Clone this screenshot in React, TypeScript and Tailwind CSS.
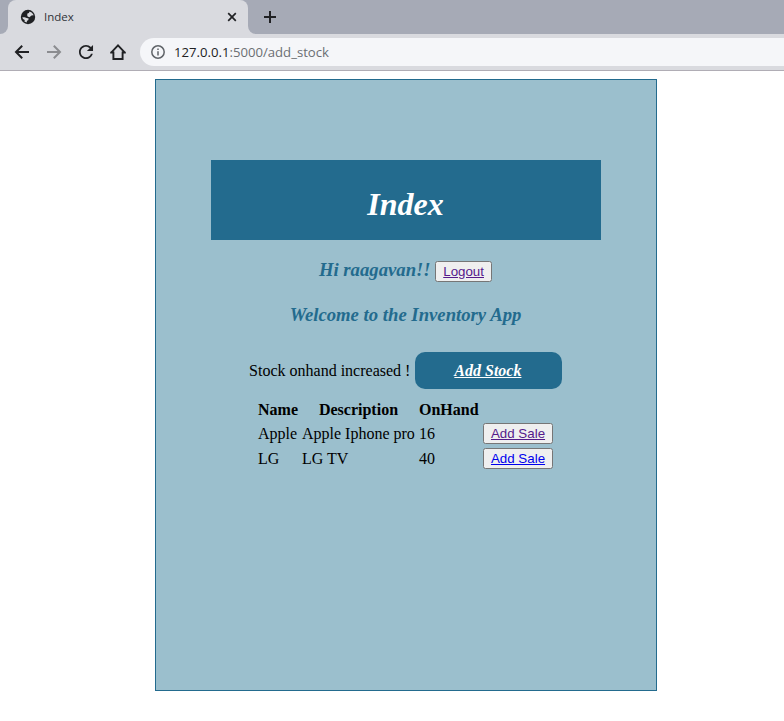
import React from "react";

const serif = "font-['Liberation_Serif','Times_New_Roman',serif]";
const ui = "font-['Open_Sans','Noto_Sans',sans-serif]";

function NativeButton({ label, className }: { label: string; className: string }) {
  return (
    <button
      className={`flex h-[21px] shrink-0 items-center justify-center rounded-[2.5px] border border-[#767676] bg-[#efefef] font-['Liberation_Sans',Arial,sans-serif] text-[13.333px] leading-[15px] whitespace-nowrap underline ${className}`}
    >
      {label}
    </button>
  );
}

function TabStrip() {
  return (
    <div className="flex h-[34px] bg-[#d9dadf]">
      <div className="w-2 rounded-br-[8px] bg-[#a6aab6]" />
      <div className="flex w-60 items-center bg-[#a6aab6]">
        <div className="flex h-full w-full items-center rounded-t-[8px] bg-[#d9dadf] pr-[10px] pl-3">
          <svg width="16" height="16" viewBox="0 0 16 16">
            <circle cx="8" cy="8" r="7.2" fill="#202124" />
            <path
              d="M7.4 4.6 8.9 3.9 9.5 2.5 11.6 3.4 13.2 5.3 13.4 6.6 12 6.2 10.6 7.2 9.4 8.3 7.6 7.6 7.2 6.2zM2.3 8.2 4.6 8.2 6.8 8.9 8.7 9.6 8.2 11.2 7 11.8 6.7 13.5 4.4 12.6 4.8 11 3 10z"
              fill="#d9dadf"
            />
          </svg>
          <span className={`ml-2 text-[11.5px] leading-4 text-[#303338] ${ui}`}>Index</span>
          <svg className="ml-auto" width="12" height="12" viewBox="0 0 12 12" stroke="#202124" strokeWidth="1.7">
            <path d="M2.2 2.2 9.8 9.8M9.8 2.2 2.2 9.8" />
          </svg>
        </div>
      </div>
      <div className="flex flex-1 items-center rounded-bl-[8px] bg-[#a6aab6] pl-[15px]">
        <svg width="14" height="14" viewBox="0 0 14 14" stroke="#202124" strokeWidth="2">
          <path d="M7 1V13M1 7H13" />
        </svg>
      </div>
    </div>
  );
}

function Toolbar() {
  return (
    <div className="flex h-[37px] items-center border-b border-[#b0adb5] bg-[#d9dadf] pl-[14px]">
      <div className="flex gap-4">
        <svg width="16" height="16" viewBox="0 0 16 16" fill="none" stroke="#202124" strokeWidth="2">
          <path d="M15 8H2.4M8.2 1.8 2 8l6.2 6.2" />
        </svg>
        <svg width="16" height="16" viewBox="0 0 16 16" fill="none" stroke="#8b8c90" strokeWidth="2">
          <path d="M1 8h12.6M7.8 1.8 14 8l-6.2 6.2" />
        </svg>
        <svg width="16" height="16" viewBox="2.9 2.9 18.2 18.2" fill="#202124">
          <path d="M17.65 6.35C16.2 4.9 14.21 4 12 4c-4.42 0-7.99 3.58-7.99 8s3.57 8 7.99 8c3.73 0 6.84-2.55 7.73-6h-2.08c-.82 2.33-3.04 4-5.65 4-3.31 0-6-2.69-6-6s2.69-6 6-6c1.66 0 3.14.69 4.22 1.78L13 11h7V4l-2.35 2.35z" />
        </svg>
        <svg width="16" height="16" viewBox="0 0 16 16" fill="none" stroke="#202124" strokeWidth="1.9">
          <path d="M3.4 7.4V15h9.2V7.4M0.2 8.6h3M12.8 8.6h3M1.4 8.4 8 1.4l6.6 7" />
        </svg>
      </div>
      <div className="ml-[14px] flex h-7 flex-1 items-center rounded-l-full bg-[#f5f6f9] pl-[11px]">
        <svg width="14" height="14" viewBox="0 0 14 14" fill="none" stroke="#5f6368" strokeWidth="1.5">
          <circle cx="7" cy="7" r="6.2" />
          <path d="M7 6.2V10.4M7 3.6V5.1" />
        </svg>
        <span className={`ml-[9px] text-[13.15px] leading-5 whitespace-nowrap text-[#6b6e73] ${ui}`}>
          <span className="text-[#202124]">127.0.0.1</span>:5000/add_stock
        </span>
      </div>
    </div>
  );
}

const rows = [
  { name: "Apple", description: "Apple Iphone pro", onHand: 16, link: "text-[#551a8b]" },
  { name: "LG", description: "LG TV", onHand: 40, link: "text-[#0000ee]" },
];

export default function App() {
  return (
    <div className="h-[721px] overflow-hidden bg-white">
      <TabStrip />
      <Toolbar />
      <main
        className={`mt-2 ml-[155px] flex h-[612px] w-[502px] flex-col items-center border border-[#236b8e] bg-[#9bbfcd] pt-20 text-base leading-[18px] text-black ${serif}`}
      >
        <h1 className="flex h-20 w-[390px] items-center justify-center bg-[#236b8e] pt-[8px] pr-px text-[32px] leading-9 font-bold text-white italic">
          Index
        </h1>
        <div className="mt-[19px] flex h-[22px] items-center gap-[4.5px] pr-px">
          <h2 className="mb-[2px] text-[18.72px] leading-[21px] font-bold text-[#236b8e] italic">Hi raagavan!!</h2>
          <NativeButton label="Logout" className="mt-[2px] w-[57px] text-[#551a8b]" />
        </div>
        <h2 className="mt-[23px] pr-px text-[18.72px] leading-[21px] font-bold text-[#236b8e] italic">
          Welcome to the Inventory App
        </h2>
        <div className="mt-[27px] flex items-center gap-[4.5px] pr-px">
          <span>Stock onhand increased !</span>
          <a className="flex h-[37px] w-[147px] items-center justify-center rounded-[10px] bg-[#236b8e] pr-px font-bold text-white italic underline">
            Add Stock
          </a>
        </div>
        <div className="mt-[11px] grid grid-cols-[44px_117px_64px_70px] items-center pr-px">
          <div className="mb-[2px] font-bold">Name</div>
          <div className="mb-[2px] pr-1 text-center font-bold">Description</div>
          <div className="mb-[2px] font-bold">OnHand</div>
          <div className="h-[21px]" />
          {rows.map((r) => (
            <React.Fragment key={r.name}>
              <div>{r.name}</div>
              <div>{r.description}</div>
              <div>{r.onHand}</div>
              <div className="flex h-[25px] items-center">
                <NativeButton label="Add Sale" className={`w-[70px] ${r.link}`} />
              </div>
            </React.Fragment>
          ))}
        </div>
      </main>
    </div>
  );
}
